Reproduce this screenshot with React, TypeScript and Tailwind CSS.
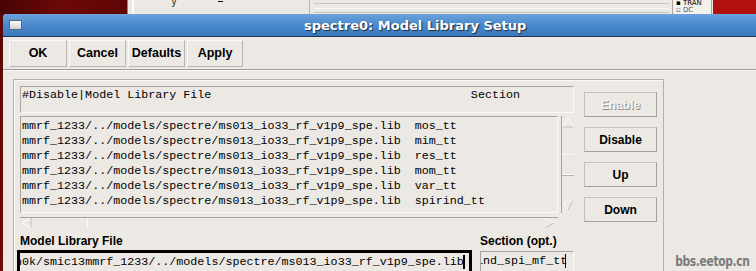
const mono = "font-['Liberation_Mono',_'DejaVu_Sans_Mono',monospace]";
const sans = "font-['Liberation_Sans',_Arial,sans-serif]";

const path = "mmrf_1233/../models/spectre/ms013_io33_rf_v1p9_spe.lib";
const sections = ["mos_tt", "mim_tt", "res_tt", "mom_tt", "var_tt", "spirind_tt"];

function ToolButton({ label, w }: { label: string; w: string }) {
  return (
    <div
      className={`${w} h-[27px] flex items-center justify-center border border-t-[#fbfaf8] border-l-[#fbfaf8] border-r-[#b9b6b0] border-b-[#b9b6b0] text-[12.5px] font-bold text-black ${sans}`}
    >
      {label}
    </div>
  );
}

function SideButton({ label, disabled }: { label: string; disabled?: boolean }) {
  return (
    <div
      className={`w-[73px] h-[25px] flex items-center justify-center border border-t-[#c4c1bb] border-l-[#c4c1bb] border-r-[#a3a09a] border-b-[#a3a09a] text-[12px] font-bold ${sans} ${
        disabled ? "text-[#f4f3f0] [text-shadow:1px_1px_0_#8d8a85]" : "text-black"
      }`}
    >
      {label}
    </div>
  );
}

function Arrow({ dir }: { dir: "up" | "down" | "left" | "right" }) {
  const pts = {
    up: "5,1 10,10 0,10",
    down: "0,0 10,0 5,9",
    left: "1,5 10,0 10,10",
    right: "0,0 9,5 0,10",
  }[dir];
  return (
    <svg width="11" height="11" viewBox="0 0 11 11" className="block">
      <polygon points={pts} fill="none" stroke="#fdfdfc" strokeWidth="1" />
      <polyline
        points={dir === "up" ? "10,10 0,10" : dir === "down" ? "10,0 5,9" : dir === "left" ? "10,0 10,10" : "9,5 0,10"}
        fill="none"
        stroke="#bdbab4"
        strokeWidth="1"
      />
    </svg>
  );
}

export default function App() {
  return (
    <div className="w-[756px] h-[271px] overflow-hidden bg-gradient-to-b from-[#5c0606] to-[#6e0b0b]">
      {/* window behind */}
      <div className="flex h-[14px]">
        <div className="w-[127px] bg-gradient-to-r from-[#4a0404] via-[#6d0808] to-[#5e0505]" />
        <div className="w-[586px] bg-[#ece9e4] border-l border-[#8c8984] flex">
          <div className="w-[177px] border-l-2 border-[#fbfaf8] ml-[4px] relative">
            <span className="absolute left-[38px] top-[-2px] text-[8px] leading-[8px] text-black">y</span>
            <span className="absolute left-[84px] top-[1px] w-[5px] h-[1px] bg-black" />
          </div>
          <div className="w-[360px] border-l border-[#b9b6b0] flex flex-col pl-[4px]">
            <div className="h-[4px] border-b border-[#c9c6c0]" />
            <div className="h-[5px] border-b border-[#fbfaf8]" />
            <div className="h-[4px] border-b border-[#c9c6c0]" />
          </div>
          <div className="w-[40px] ml-[3px] border-x border-[#a7a49e] bg-[#f3f1ee] pl-[3px] leading-[7px] text-[7px] text-black font-['DejaVu_Sans',sans-serif]">
            <div>▪ TRAN</div>
            <div className="text-[#555]">▫ DC</div>
          </div>
        </div>
        <div className="flex-1 bg-[#b31010]" />
      </div>

      {/* dialog */}
      <div className="ml-[3px] h-[257px] bg-[#ece9e4] rounded-tl-[4px] overflow-hidden">
        <div className="h-[23px] bg-gradient-to-b from-[#6aa2dc] via-[#4a89cc] to-[#3a78bd] border-b border-[#1f3450] flex items-center relative">
          <div className="ml-[6px] w-[13px] h-[10px] border border-[#5e6670] bg-gradient-to-b from-[#fafafa] to-[#cfd3d8]" />
          <div className="absolute left-[301px] top-[2px] text-[13px] font-bold text-white font-['DejaVu_Sans',sans-serif] [text-shadow:1px_1px_1px_#1b2a3c]">
            spectre0: Model Library Setup
          </div>
        </div>

        {/* toolbar */}
        <div className="flex items-center gap-[2px] pl-[6px] pt-[3px]">
          <ToolButton label="OK" w="w-[58px]" />
          <ToolButton label="Cancel" w="w-[57px]" />
          <ToolButton label="Defaults" w="w-[57px]" />
          <ToolButton label="Apply" w="w-[56px]" />
        </div>
        <div className="mt-[2px] h-[2px] border-t border-[#9f9c97] border-b border-b-[#fbfaf8]" />

        {/* frame */}
        <div className="ml-[10px] mt-[8px] w-[651px] h-[200px] border-t border-l border-[#b4b1ab] shadow-[inset_1px_1px_0_#fbfaf8] border-r border-r-[#b4b1ab] flex pl-[6px] pt-[6px]">
          <div className="w-[554px] flex flex-col">
            <div className={`h-[27px] border border-t-[#a8a5a0] border-l-[#a8a5a0] border-r-[#fbfaf8] border-b-[#fbfaf8] pl-[1px] pt-[1px] text-[11.7px] leading-[15px] text-black whitespace-pre ${mono}`}>
              {"#Disable|Model Library File                                     Section"}
            </div>
            <div className="flex mt-[3px] h-[97px]">
              <div className={`w-[538px] border border-t-[#a8a5a0] border-l-[#a8a5a0] border-r-[#fbfaf8] border-b-[#fbfaf8] pl-[1px] pt-[2px] text-[11.7px] leading-[15px] text-black whitespace-pre overflow-hidden ${mono}`}>
                {sections.map((s) => (
                  <div key={s}>{`${path}  ${s}`}</div>
                ))}
              </div>
              <div className="ml-[3px] w-[13px] border-l border-[#a8a5a0] flex flex-col">
                <div className="pl-[1px] pt-[1px]">
                  <Arrow dir="up" />
                </div>
                <div className="mt-[26px] h-[21px] border-y border-[#fbfaf8] shadow-[0_1px_0_#b4b1ab]" />
                <div className="flex-1" />
                <div className="pl-[1px] pb-[1px]">
                  <Arrow dir="down" />
                </div>
              </div>
            </div>
            <div className="mt-[4px] w-[538px] h-[11px] border-t border-[#a8a5a0] flex items-center">
              <div className="pl-[1px]">
                <Arrow dir="left" />
              </div>
              <div className="w-[56px] h-full border-r border-[#fbfaf8]" />
              <div className="flex-1" />
              <div className="pr-[2px]">
                <Arrow dir="right" />
              </div>
            </div>
          </div>
          <div className="ml-[10px] mt-[6px] flex flex-col gap-[10px]">
            <SideButton label="Enable" disabled />
            <SideButton label="Disable" />
            <SideButton label="Up" />
            <SideButton label="Down" />
          </div>
        </div>

        {/* entry fields (overlap frame bottom) */}
        <div className="-mt-[47px] flex pl-[14px] relative">
          <div className="w-[455px] flex flex-col">
            <div className={`pl-[3px] h-[16px] text-[12px] font-bold text-black ${sans}`}>Model Library File</div>
            <div className={`mt-[2px] h-[26px] border-[3px] border-black pl-[2px] pt-[2px] overflow-hidden whitespace-pre text-[11.7px] leading-[15px] text-black ${mono} flex`}>
              <span className="-ml-[7px] shrink-0">{"n0k/smic13mmrf_1233/../models/spectre/ms013_io33_rf_v1p9_spe.lib"}</span>
              <span className="w-[2px] h-[14px] bg-black -ml-[1px] shrink-0" />
            </div>
          </div>
          <div className="ml-[8px] w-[94px] flex flex-col">
            <div className={`h-[16px] text-[12px] font-bold text-black ${sans}`}>Section (opt.)</div>
            <div className={`mt-[3px] h-[24px] border border-t-[#a8a5a0] border-l-[#a8a5a0] border-r-[#fbfaf8] border-b-[#fbfaf8] pl-[2px] pt-[2px] overflow-hidden whitespace-pre text-[11.7px] leading-[15px] text-black ${mono} flex`}>
              <span className="-ml-[7px] shrink-0">{"ind_spi_mf_tt"}</span>
              <span className="w-[1px] h-[14px] bg-black -ml-[2px] shrink-0" />
            </div>
          </div>
          <div className="ml-auto mr-[6px] self-end mb-[4px] origin-right scale-x-[0.85] text-[14px] font-bold tracking-[-0.4px] text-[#7b7b7b] font-['DejaVu_Sans_Condensed','DejaVu_Sans',sans-serif]">
            bbs.eetop.cn
          </div>
        </div>
      </div>
    </div>
  );
}
